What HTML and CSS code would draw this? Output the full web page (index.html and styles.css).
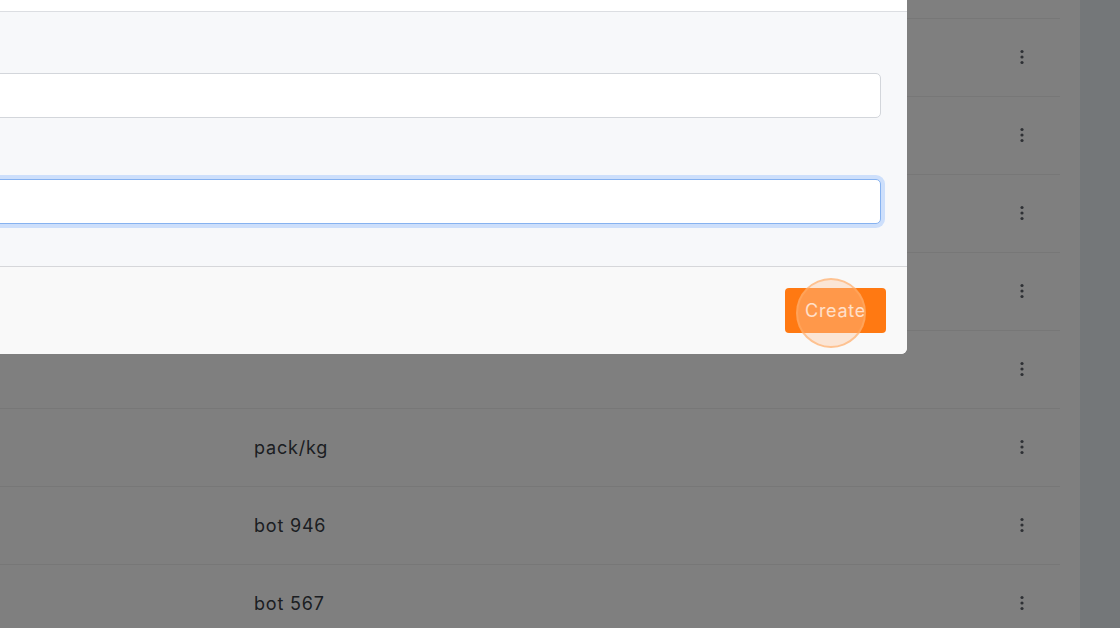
FILE: index.html
```html
<!DOCTYPE html>
<html lang="en">

<head>
    <meta charset="UTF-8">
    <meta name="viewport" content="width=device-width, initial-scale=1.0">
    <title>Units</title>
    <link rel="stylesheet" href="styles.css">
</head>

<body>

    <div class="page">
        <div class="table">
            <div class="row"><div class="cell-unit"></div><div class="cell-action"><svg class="kebab" viewBox="0 0 16 16"><circle cx="8" cy="2.5" r="1.6"/><circle cx="8" cy="8" r="1.6"/><circle cx="8" cy="13.5" r="1.6"/></svg></div></div>
            <div class="row"><div class="cell-unit"></div><div class="cell-action"><svg class="kebab" viewBox="0 0 16 16"><circle cx="8" cy="2.5" r="1.6"/><circle cx="8" cy="8" r="1.6"/><circle cx="8" cy="13.5" r="1.6"/></svg></div></div>
            <div class="row"><div class="cell-unit"></div><div class="cell-action"><svg class="kebab" viewBox="0 0 16 16"><circle cx="8" cy="2.5" r="1.6"/><circle cx="8" cy="8" r="1.6"/><circle cx="8" cy="13.5" r="1.6"/></svg></div></div>
            <div class="row"><div class="cell-unit"></div><div class="cell-action"><svg class="kebab" viewBox="0 0 16 16"><circle cx="8" cy="2.5" r="1.6"/><circle cx="8" cy="8" r="1.6"/><circle cx="8" cy="13.5" r="1.6"/></svg></div></div>
            <div class="row"><div class="cell-unit"></div><div class="cell-action"><svg class="kebab" viewBox="0 0 16 16"><circle cx="8" cy="2.5" r="1.6"/><circle cx="8" cy="8" r="1.6"/><circle cx="8" cy="13.5" r="1.6"/></svg></div></div>
            <div class="row"><div class="cell-unit">pack/kg</div><div class="cell-action"><svg class="kebab" viewBox="0 0 16 16"><circle cx="8" cy="2.5" r="1.6"/><circle cx="8" cy="8" r="1.6"/><circle cx="8" cy="13.5" r="1.6"/></svg></div></div>
            <div class="row"><div class="cell-unit">bot 946</div><div class="cell-action"><svg class="kebab" viewBox="0 0 16 16"><circle cx="8" cy="2.5" r="1.6"/><circle cx="8" cy="8" r="1.6"/><circle cx="8" cy="13.5" r="1.6"/></svg></div></div>
            <div class="row"><div class="cell-unit">bot 567</div><div class="cell-action"><svg class="kebab" viewBox="0 0 16 16"><circle cx="8" cy="2.5" r="1.6"/><circle cx="8" cy="8" r="1.6"/><circle cx="8" cy="13.5" r="1.6"/></svg></div></div>
        </div>
        <div class="side"></div>
    </div>

    <div class="backdrop"></div>

    <div class="modal">
        <div class="modal-header"></div>
        <div class="modal-body">
            <div class="field">
                <span class="label-space"></span>
                <input class="input" type="text">
            </div>
            <div class="field">
                <span class="label-space"></span>
                <input class="input input-focus" type="text">
            </div>
        </div>
        <div class="modal-footer">
            <button class="btn-create">Create</button>
            <span class="click-ring"></span>
        </div>
    </div>

</body>

</html>
```

FILE: styles.css
```css
body {
    margin: 0;
    font-family: Inter, "Open Sans", sans-serif;
    background-color: #ffffff;
    overflow: hidden;
    height: 628px;
}

.page {
    display: flex;
    height: 628px;
}

.table {
    width: 1060px;
    padding-top: 18px;
    margin-right: 20px;
}

.row {
    display: flex;
    align-items: center;
    height: 77px;
    border-top: 1px solid #eeeeee;
}

.cell-unit {
    margin-left: 254px;
    flex: 1;
    font-size: 18px;
    letter-spacing: 0.8px;
    color: #383c44;
}

.cell-action {
    width: 16px;
    margin-right: 30px;
    margin-bottom: 2px;
    display: flex;
}

.kebab {
    width: 16px;
    height: 16px;
    fill: #5c6068;
}

.side {
    flex: 1;
    background-color: #e8eef2;
}

.backdrop {
    position: fixed;
    top: 0;
    left: 0;
    right: 0;
    bottom: 0;
    background-color: rgba(0, 0, 0, 0.5);
}

.modal {
    position: absolute;
    top: -49px;
    left: -393px;
    width: 1300px;
    background-color: #ffffff;
    border-radius: 6px;
    overflow: hidden;
}

.modal-header {
    height: 60px;
    border-bottom: 1px solid #dcdee2;
}

.modal-body {
    background-color: #f7f8fa;
    padding: 16px 26px 42px;
}

.field {
    display: flex;
    flex-direction: column;
}

.field + .field {
    margin-top: 16px;
}

.label-space {
    height: 45px;
}

.input {
    height: 45px;
    box-sizing: border-box;
    border: 1px solid #d3d6db;
    border-radius: 5px;
    background-color: #ffffff;
    outline: none;
}

.input-focus {
    border-color: #86b2f0;
    box-shadow: 0 0 0 4px #cddffb;
}

.modal-footer {
    position: relative;
    display: flex;
    justify-content: flex-end;
    background-color: #f9f9f9;
    border-top: 1px solid #d6d7da;
    padding: 21px;
}

.btn-create {
    width: 101px;
    height: 45px;
    border: none;
    border-radius: 4px;
    background-color: #ff7912;
    color: #fff0e4;
    font-family: Inter, sans-serif;
    font-size: 18px;
    letter-spacing: 0.7px;
    cursor: pointer;
}

.click-ring {
    position: absolute;
    right: 41px;
    top: 11px;
    width: 66px;
    height: 66px;
    border-radius: 50%;
    background-color: rgba(255, 200, 160, 0.4);
    border: 2px solid rgba(255, 170, 100, 0.6);
}
```
